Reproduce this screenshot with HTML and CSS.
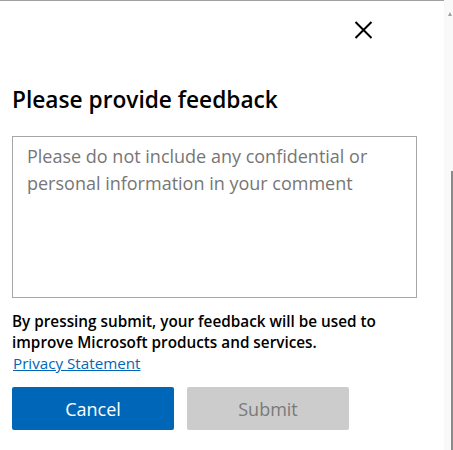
FILE: index.html
```html
<!DOCTYPE html>
<html lang="en">
<head>
<meta charset="utf-8">
<title>Feedback</title>
<link rel="stylesheet" href="styles.css">
</head>
<body>
<div class="frame">
  <div class="panel">
    <div class="close-row">
      <button class="close" aria-label="Close">
        <svg width="19" height="18" viewBox="0 0 19 18"><path d="M1.5 1 L17.5 17 M17.5 1 L1.5 17" stroke="#000" stroke-width="2" fill="none"/></svg>
      </button>
    </div>
    <h1 class="title">Please provide feedback</h1>
    <textarea class="comment" placeholder="Please do not include any confidential or personal information in your comment"></textarea>
    <p class="notice">By pressing submit, your feedback will be used to improve Microsoft products and services.</p>
    <a class="privacy" href="#">Privacy Statement</a>
    <div class="actions">
      <button class="btn btn-primary">Cancel</button>
      <button class="btn btn-disabled" disabled>Submit</button>
    </div>
  </div>
  <div class="scrollbar">
    <svg class="arrow" width="4" height="4" viewBox="0 0 4 4"><path d="M0 4 L2 0 L4 4 Z" fill="#a0a0a0"/></svg>
    <div class="thumb"></div>
  </div>
</div>
</body>
</html>
```

FILE: styles.css
```css
html, body {
  margin: 0;
  padding: 0;
  background: #fff;
}
body {
  font-family: "Open Sans", "Noto Sans", sans-serif;
  color: #000;
}
.frame {
  display: flex;
  height: 450px;
  overflow: hidden;
}
.panel {
  flex: 1;
  border-top: 1px solid #a0a0a0;
  padding-left: 12px;
}
.close-row {
  display: flex;
  justify-content: flex-end;
  padding-right: 71px;
  margin-top: 20px;
}
.close {
  border: 0;
  background: none;
  padding: 0;
  width: 19px;
  height: 18px;
  display: block;
}
.close svg { display: block; }
.title {
  margin: 46px 0 0;
  font-size: 22.7px;
  font-weight: 600;
  line-height: 30px;
}
.comment {
  display: block;
  box-sizing: border-box;
  margin-top: 21px;
  width: 405px;
  height: 162px;
  border: 1px solid #a6a6a6;
  border-radius: 0;
  padding: 6px 14px;
  font-family: inherit;
  font-size: 18px;
  line-height: 27px;
  resize: none;
  outline: none;
}
.comment::placeholder {
  color: #767676;
}
.notice {
  margin: 13px 0 0;
  max-width: 405px;
  font-size: 15.3px;
  font-weight: 600;
  line-height: 21px;
}
.privacy {
  display: block;
  width: max-content;
  margin-left: 1px;
  font-size: 15.2px;
  line-height: 21px;
  color: #0067b8;
}
.actions {
  display: flex;
  gap: 13px;
  margin-top: 13px;
}
.btn {
  width: 162px;
  height: 43px;
  border: 0;
  border-radius: 2px;
  font-family: inherit;
  font-size: 18px;
}
.btn-primary {
  background: #0067b8;
  color: #fff;
}
.btn-disabled {
  background: #cccccc;
  color: #7a7a7a;
}
.scrollbar {
  width: 9px;
  background: #f9f9f9;
  display: flex;
  flex-direction: column;
  align-items: flex-end;
}
.arrow {
  display: block;
  margin-top: 12px;
  margin-right: 1px;
}
.thumb {
  width: 2px;
  margin-top: 155px;
  flex: 1;
  background: #8a8a8a;
}
```
